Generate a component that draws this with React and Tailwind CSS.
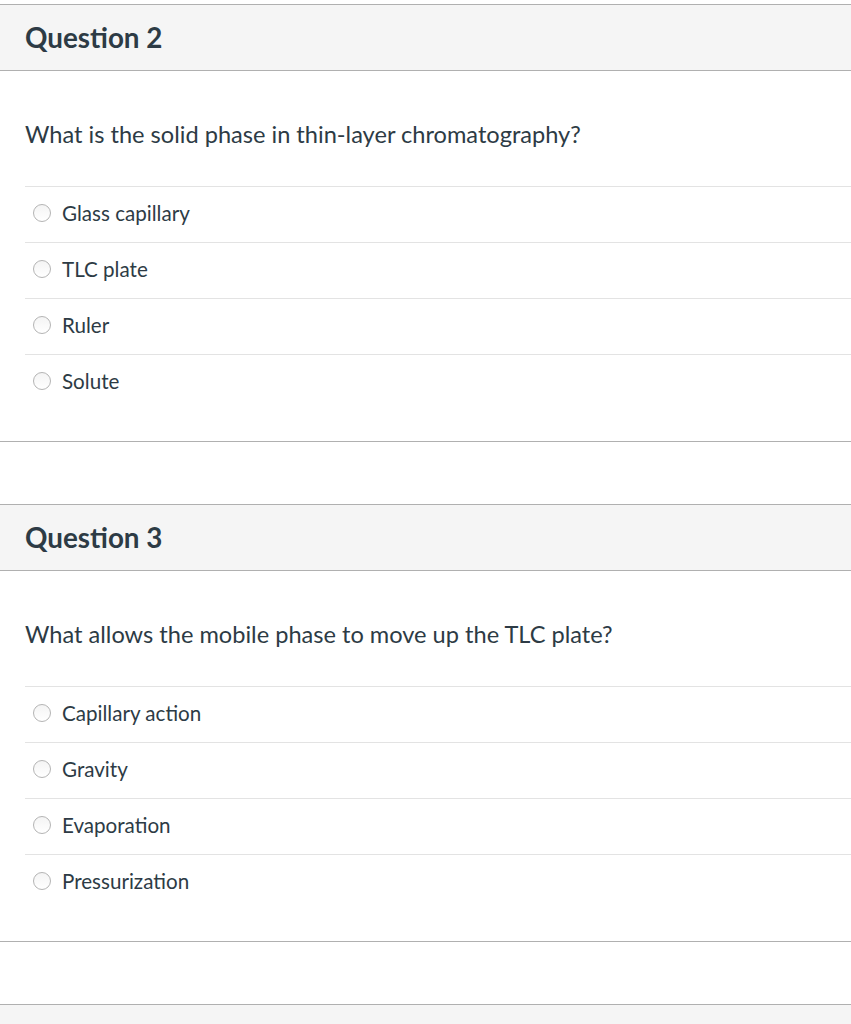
import React from 'react'

const questions = [
  {
    title: 'Question 2',
    text: 'What is the solid phase in thin-layer chromatography?',
    answers: ['Glass capillary', 'TLC plate', 'Ruler', 'Solute'],
  },
  {
    title: 'Question 3',
    text: 'What allows the mobile phase to move up the TLC plate?',
    answers: ['Capillary action', 'Gravity', 'Evaporation', 'Pressurization'],
  },
]

function Radio() {
  return (
    <span className="ml-[8px] mr-[11px] h-[18px] w-[18px] shrink-0 rounded-full border border-[#b4b4b4] bg-gradient-to-b from-[#f4f4f4] to-white" />
  )
}

function QuestionCard({ q }) {
  return (
    <div className="border-y border-[#b0b0b0]">
      <div className="flex h-[66px] items-center border-b border-[#b0b0b0] bg-[#f5f5f5] px-[25px]">
        <h2 className="text-[27.8px] font-bold text-[#2d3b45]">{q.title}</h2>
      </div>
      <div className="pb-[31px]">
        <p className="mb-[37px] mt-[48px] px-[25px] text-[23.6px] leading-[30px] text-[#2d3b45]">{q.text}</p>
        <div className="ml-[25px]">
          {q.answers.map(a => (
            <div key={a} className="flex h-[56px] items-center border-t border-[#e3e3e3]">
              <div className="-mt-[3px] flex items-center">
                <Radio />
                <span className="text-[20.6px] text-[#2d3b45]">{a}</span>
              </div>
            </div>
          ))}
        </div>
      </div>
    </div>
  )
}

export default function App() {
  return (
    <div className="min-h-[1024px] bg-white pt-[4px] font-['Lato','Liberation_Sans',sans-serif]">
      <div className="flex flex-col gap-[62px]">
        {questions.map(q => (
          <QuestionCard key={q.title} q={q} />
        ))}
        <div className="h-[40px] border-t border-[#b0b0b0] bg-[#f5f5f5]" />
      </div>
    </div>
  )
}
